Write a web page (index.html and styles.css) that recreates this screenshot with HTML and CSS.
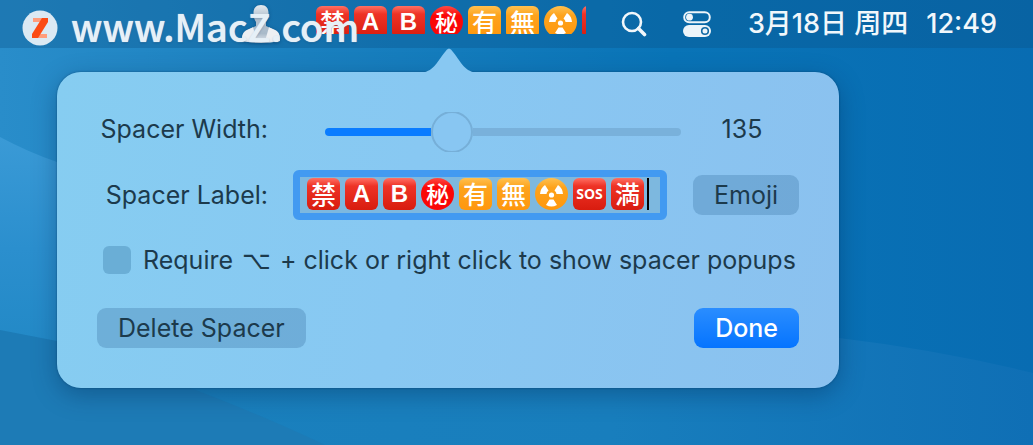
FILE: index.html
```html
<!DOCTYPE html>
<html lang="zh-CN">
<head>
<meta charset="utf-8">
<title>Spacer</title>
<link rel="stylesheet" href="styles.css">
</head>
<body>
<svg class="wallpaper" viewBox="0 0 1033 445" preserveAspectRatio="none" aria-hidden="true">
  <defs>
    <linearGradient id="sky" x1="0" y1="0" x2="1" y2="0"><stop offset="0" stop-color="#298dca"/><stop offset=".3" stop-color="#1a80bf"/><stop offset=".65" stop-color="#0974b7"/><stop offset="1" stop-color="#086cb2"/></linearGradient>
    <linearGradient id="wave" x1="0" y1="0" x2="0" y2="1"><stop offset="0" stop-color="#3a9ad6"/><stop offset=".5" stop-color="#2b8fce"/><stop offset="1" stop-color="#2188c5"/></linearGradient>
    <linearGradient id="low" gradientUnits="userSpaceOnUse" x1="190" y1="0" x2="1033" y2="0"><stop offset="0" stop-color="#1a80bd"/><stop offset=".5" stop-color="#187ebd"/><stop offset="1" stop-color="#0f6fb5"/></linearGradient>
  </defs>
  <path fill="url(#sky)" d="M0 0H1033V445H0Z"/>
  <path fill="url(#low)" d="M190 300Q600 310 839 338Q940 350 1033 373V445H190Z"/>
  <path fill="url(#wave)" d="M0 137Q28 152 57 162L190 220V360H0Z"/>
  <path fill="#1d7bb6" d="M0 330 57 341 180 384Q260 414 325 445H0Z"/>
</svg>
<header class="menubar">
  <svg class="user" viewBox="0 0 38 38" aria-hidden="true">
    <defs><linearGradient id="body" x1="0" y1="0" x2="0" y2="1"><stop offset="0" stop-color="#e6ebf0"/><stop offset=".3" stop-color="#b4c3d0"/><stop offset=".75" stop-color="#a9bac9"/><stop offset="1" stop-color="#eceff2"/></linearGradient></defs>
    <path fill="url(#body)" d="M19 0c5 0 7.500 3 7.500 8 0 4-1 7-2.500 9v4l9 4c4 2 5 5 5 10v1q-19 4-38 0v-1c0-5 1-8 5-10l9-4v-4c-1.500-2-2.500-5-2.500-9 0-5 2.500-8 7.500-8z"/>
    <path fill="#edf0f3" d="M0 35c0-5 1-8 5-10l6-2.700L15 36q-8 1-15 0zM38 35c0-5-1-8-5-10l-6-2.700L23 36q8 1 15 0z"/>
  </svg>
  <div class="tokens spacer">
    <span class="token red">禁</span><span class="token red latin">A</span><span class="token red latin">B</span><span class="token round pure">秘</span><span class="token orange">有</span><span class="token orange">無</span><span class="token round orange"><svg viewBox="0 0 32 32" aria-label="radioactive"><use href="#radiation"/></svg></span><span class="token red latin"></span>
  </div>
  <svg class="search" viewBox="0 0 26 26" fill="none" stroke="#f1f7fb" aria-label="Search"><circle cx="11" cy="11" r="9" stroke-width="2.6"/><path d="m17.500 17.500 6 6" stroke-width="3.6" stroke-linecap="round"/></svg>
  <svg class="control" viewBox="0 0 28 26" aria-label="Control Center"><rect x="1.2" y="1.2" width="25.6" height="10" rx="5" fill="none" stroke="#edf4f9" stroke-width="2"/><circle cx="6.500" cy="6.200" r="3.4" fill="#edf4f9"/><rect y="14" width="28" height="12" rx="6" fill="#edf4f9"/><circle cx="22" cy="20" r="3.3" fill="#edf4f9" stroke="#1269a4" stroke-width="1.6"/></svg>
  <time class="date">3月18日 周四</time>
  <time class="clock">12:49</time>
</header>
<main class="popover">
  <svg class="arrow" viewBox="0 0 60 25" aria-hidden="true"><path fill="#88c8f2" d="M0 25C15 24 17 15 26 4Q30-3 34 4C43 15 45 24 60 25Z"/></svg>
  <div class="row width-row">
    <label for="width">Spacer Width:</label>
    <input class="slider" id="width" type="range" min="0" max="400" value="135">
    <output for="width">135</output>
  </div>
  <div class="row label-row">
    <label for="label">Spacer Label:</label>
    <div class="tokens field">
      <span class="token red">禁</span><span class="token red latin">A</span><span class="token red latin">B</span><span class="token round pure">秘</span><span class="token orange">有</span><span class="token orange">無</span><span class="token round orange"><svg viewBox="0 0 32 32" aria-label="radioactive"><g id="radiation" fill="#fff"><circle cx="16" cy="17" r="2.6"/><path d="M13 12.500 9.500 7Q5 10 4.500 16h6.500q0-2 2-3.500zM19 12.500 22.500 7Q27 10 27.500 16h-6.500q0-2-2-3.500zM14 21.500h4l3.500 5.500q-5.500 3-11 0z"/></g></svg></span><span class="token red sos">SOS</span><span class="token red">満</span>
      <input class="entry" id="label" type="text">
    </div>
    <button class="button" type="button">Emoji</button>
  </div>
  <div class="check-row">
    <input class="check" id="require" type="checkbox">
    <label for="require">Require <span class="key">⌥</span> + click or right click to show spacer popups</label>
  </div>
  <div class="actions">
    <button class="button" type="button">Delete Spacer</button>
    <button class="button primary" type="button">Done</button>
  </div>
</main>
<div class="watermark">
  <svg viewBox="0 0 36 36" aria-hidden="true"><circle cx="18" cy="18" r="17.500" fill="#dbe9f3"/><path fill="#ff9d7c" d="M11 8h10v4H11zM16 24h9v4h-9z"/><path fill="#fb4b14" d="M20 8h6v4L16 28h-6v-4z"/></svg>
  <span>www.MacZ.com</span>
</div>
</body>
</html>
```
FILE: styles.css
```css
* { box-sizing: border-box; }
body {
  margin: 0;
  min-height: 100vh;
  position: relative;
  overflow: hidden;
  background: #1477b8;
  color: #1c3a4c;
  font: 25px/34px Inter, "Noto Sans CJK SC", sans-serif;
}
.wallpaper { position: absolute; inset: 0; width: 100%; height: 100%; z-index: -1; }
.menubar {
  display: flex;
  justify-content: flex-end;
  align-items: center;
  height: 48px;
  padding-right: 36px;
  background: rgba(10, 80, 135, .32);
  color: #f1f7fb;
}
.user { width: 38px; height: 38px; margin-right: 36px; filter: drop-shadow(0 1px 2px rgba(0, 40, 80, .4)); }
.search { width: 26px; height: 26px; margin: 0 36px 0 35px; }
.control { width: 28px; height: 26px; margin-right: 37px; }
.date,
.clock { font-size: 27px; font-weight: 500; }
.date { margin-right: 18px; }
.tokens { display: flex; gap: 5px; }
.spacer { width: 270px; height: 28px; overflow: hidden; align-self: flex-start; margin-top: 6px; }
.token {
  flex: none;
  width: 33px;
  height: 32px;
  border-radius: 6px;
  color: #fff;
  text-align: center;
  font: 500 25px/31px "Noto Sans CJK JP", sans-serif;
}
.token svg { display: block; width: 33px; height: 32px; }
.red { background: linear-gradient(#ff7063, #ee3326 25%, #d81c0f); }
.orange { background: linear-gradient(#ffc04f, #fda31c 30%, #ff970d); }
.pure { background: linear-gradient(#ff4b43, #fa0707 30%); }
.round { border-radius: 50%; font-size: 23px; }
.latin { font: 700 24px/32px "Liberation Sans", sans-serif; }
.sos { font: 700 14px/32px "Open Sans", sans-serif; }
.popover {
  position: relative;
  max-width: 782px;
  margin: 24px 57px 0;
  padding: 40px;
  border-radius: 24px;
  background: linear-gradient(100deg, #86cdf1, #88c8f2 45%, #8bc1ef);
  box-shadow: 0 0 2px rgba(0, 45, 85, .6), 0 7px 24px rgba(0, 40, 80, .36);
}
.arrow { position: absolute; left: 362px; top: -24px; width: 60px; height: 25px; }
.row { display: grid; }
.row > label { text-align: right; }
.width-row { grid-template-columns: 171px 1fr 118px; column-gap: 0; }
.width-row output { padding-left: 4px; text-align: center; }
.slider {
  --fill: calc((100% - 42px) * .3375);
  appearance: none;
  min-width: 0;
  height: 40px;
  margin: 0 0 0 57px;
  overflow: hidden;
  background: none;
}
.slider::-webkit-slider-runnable-track {
  height: 8px;
  border-radius: 4px;
  background: linear-gradient(90deg, #0a7cff var(--fill), transparent var(--fill) calc(var(--fill) + 42px), #79b1db calc(var(--fill) + 42px));
}
.slider::-webkit-slider-thumb {
  appearance: none;
  width: 42px;
  height: 42px;
  margin-top: -17px;
  border: 2px solid #76afd8;
  border-radius: 50%;
  background: #88c6f2;
}
.label-row {
  grid-template-columns: 171px 1fr 106px;
  column-gap: 26px;
  align-items: center;
  margin-top: 18px;
}
.field {
  min-width: 0;
  height: 50px;
  margin-left: -1px;
  padding: 1px 7px;
  border: 7px solid #429af1;
  border-radius: 6px;
  background: #7db8df;
}
.entry {
  flex: 1;
  min-width: 0;
  width: 0;
  height: 32px;
  margin-left: -2px;
  padding: 0;
  border: 0;
  border-left: 2px solid #000;
  outline: 0;
  background: none;
  font: inherit;
}
.button {
  height: 40px;
  padding: 0 21px;
  border: 0;
  border-radius: 9px;
  background: rgba(70, 130, 175, .38);
  color: inherit;
  font: inherit;
}
.label-row .button { padding: 0; }
.primary { background: linear-gradient(#2a8dff, #0574ff); color: #fff; font-weight: 500; }
.check-row { display: flex; align-items: center; gap: 12px; height: 40px; margin: 20px 0 28px 6px; white-space: nowrap; }
.check {
  appearance: none;
  flex: none;
  width: 28px;
  height: 28px;
  margin: 0;
  border-radius: 6px;
  background: #6aaed6;
}
.key { margin: 0 2px; font-family: "DejaVu Sans", sans-serif; }
.actions { display: flex; justify-content: space-between; }
.watermark {
  position: absolute;
  left: 22px;
  top: 0;
  display: flex;
  align-items: center;
  gap: 13px;
  height: 55px;
  color: #e6f0f7;
  font: 500 38px/50px "Noto Sans CJK SC", sans-serif;
  text-shadow: 0 0 1px #e6f0f7, 0 1px 2px rgba(0, 40, 80, .3);
}
.watermark svg { width: 36px; height: 36px; }
.watermark span { padding-bottom: 4px; }
```
